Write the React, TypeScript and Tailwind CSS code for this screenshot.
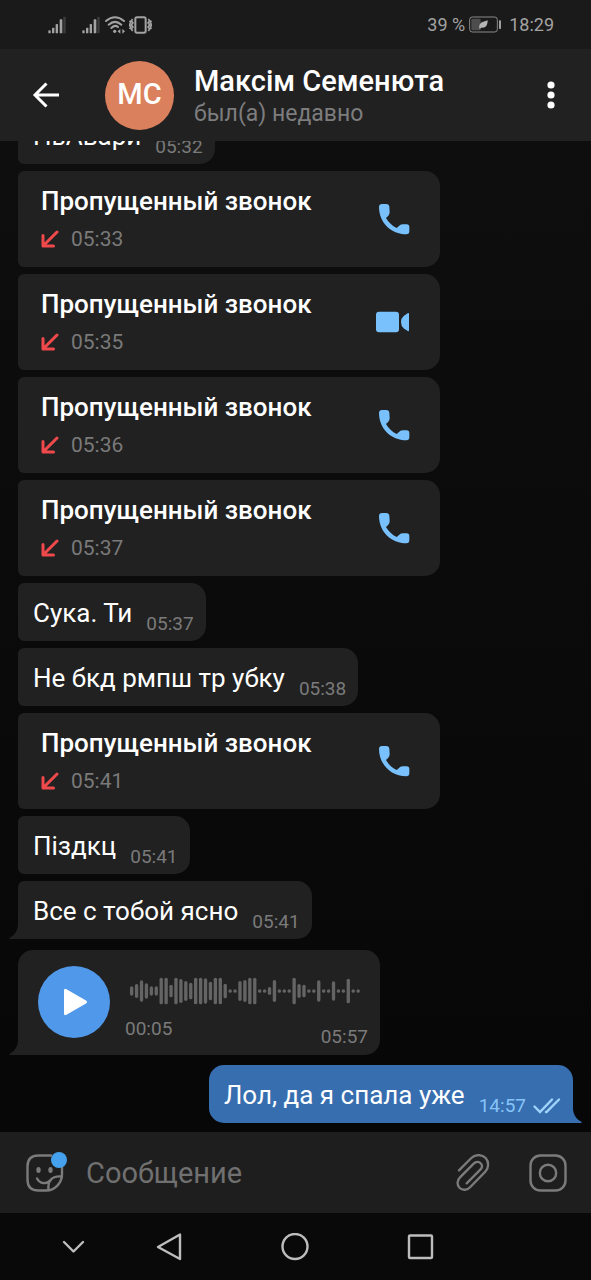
import clsx from "clsx";
import { ReactNode } from "react";

type Message =
  | { kind: "text"; text: string; time: string; tail?: boolean; own?: boolean }
  | { kind: "call"; time: string; video?: boolean }
  | { kind: "voice"; duration: string; time: string };

const messages: Message[] = [
  { kind: "text", text: "НьАвари", time: "05:32" },
  { kind: "call", time: "05:33" },
  { kind: "call", time: "05:35", video: true },
  { kind: "call", time: "05:36" },
  { kind: "call", time: "05:37" },
  { kind: "text", text: "Сука. Ти", time: "05:37" },
  { kind: "text", text: "Не бкд рмпш тр убку", time: "05:38" },
  { kind: "call", time: "05:41" },
  { kind: "text", text: "Піздкц", time: "05:41" },
  { kind: "text", text: "Все с тобой ясно", time: "05:41", tail: true },
  { kind: "voice", duration: "00:05", time: "05:57" },
  { kind: "text", text: "Лол, да я спала уже", time: "14:57", tail: true, own: true },
];

const waveform = [
  28, 42, 64, 46, 28, 28, 80, 80, 38, 80, 72, 60, 50, 80, 80, 76, 56, 80, 80, 44, 11, 11, 60, 66,
  80, 80, 11, 11, 24, 66, 11, 11, 11, 80, 42, 38, 11, 11, 64, 11, 11, 58, 11, 11, 74, 11, 11,
];

function SignalIcon() {
  return (
    <svg width="18" height="18" viewBox="0 0 54 54" aria-hidden="true">
      <g fill="#a2a2a2">
        <rect x="1" y="43" width="7" height="9" rx="2" />
        <rect x="12" y="35" width="7" height="17" rx="2" />
        <rect x="23" y="24" width="7" height="28" rx="2" />
        <rect x="35" y="10" width="8" height="42" rx="2" />
      </g>
      <rect x="46" y="2" width="7" height="50" rx="2" fill="#3d3d3d" />
    </svg>
  );
}

function WifiIcon() {
  return (
    <svg width="20" height="18" viewBox="0 0 60 54" fill="none" stroke="#a2a2a2" strokeWidth="6" strokeLinecap="round" aria-hidden="true">
      <path d="M3 15 Q30 -7 57 15" />
      <path d="M11 26 Q30 9 49 26" />
      <path d="M19 36 Q30 25 39 33" />
      <circle cx="29" cy="46" r="5" fill="#a2a2a2" stroke="none" />
      <path d="M38 46 l8 -7 v14z M60 46 l-8 -7 v14z" fill="#a2a2a2" stroke="none" />
    </svg>
  );
}

function VibrateIcon() {
  return (
    <svg width="23" height="18" viewBox="0 0 69 54" fill="none" stroke="#a2a2a2" strokeWidth="5" strokeLinejoin="round" aria-hidden="true">
      <rect x="19" y="4" width="31" height="46" rx="5" strokeWidth="6" />
      <path d="M11 9 l-4 5 5 6 -5 7 5 6 -5 6 4 6 M2 14 l3 6 -4 7 4 6 -3 6" />
      <path d="M58 9 l4 5 -5 6 5 7 -5 6 5 6 -4 6 M67 14 l-3 6 4 7 -4 6 3 6" />
    </svg>
  );
}

function BatteryIcon() {
  return (
    <svg width="32" height="17" viewBox="0 0 96 51" aria-hidden="true">
      <rect x="2" y="3" width="83" height="45" rx="8" fill="none" stroke="#8a8a8a" strokeWidth="3" />
      <rect x="7" y="8" width="28" height="35" rx="3" fill="#4d4d4d" />
      <rect x="90" y="13" width="6" height="26" rx="2" fill="#a2a2a2" />
      <path d="M31 37 c-2-11 4-18 12-20 l13-4 c0 15-5 24-20 22 l-4 4z" fill="#b4b4b4" />
    </svg>
  );
}

function StatusBar() {
  return (
    <div className="flex h-[49px] shrink-0 items-center bg-[#1a1a1a] pr-[37px] pl-12 text-[18px] text-[#a2a2a2]">
      <SignalIcon />
      <div className="ml-4">
        <SignalIcon />
      </div>
      <div className="ml-[5px] flex items-center gap-1">
        <WifiIcon />
        <VibrateIcon />
      </div>
      <div className="ml-auto flex items-center gap-1">
        <span>39 %</span>
        <BatteryIcon />
        <span className="ml-1">18:29</span>
      </div>
    </div>
  );
}

function Header() {
  return (
    <header className="flex h-[92px] shrink-0 items-center bg-[#212122] pr-9 pl-8">
      <button type="button" aria-label="Назад">
        <svg width="28" height="28" viewBox="0 0 28 28" fill="none" stroke="#fff" strokeWidth="3">
          <path d="M27 14 H3 M14.500 2.500 L3 14 L14.500 25.500" />
        </svg>
      </button>
      <div className="ml-[45px] flex size-[69px] items-center justify-center rounded-full bg-[#db805c] text-[29px] font-medium text-white">
        МС
      </div>
      <div className="ml-5 min-w-0 flex-1 pt-[3px]">
        <h1 className="truncate text-[29px] leading-[34px] font-medium text-white">Максім Семенюта</h1>
        <p className="text-[23px] leading-8 text-[#7d7d7e]">был(а) недавно</p>
      </div>
      <button type="button" aria-label="Меню">
        <svg width="8" height="28" viewBox="0 0 8 28" fill="#fff">
          <circle cx="4" cy="4" r="3.600" />
          <circle cx="4" cy="14" r="3.600" />
          <circle cx="4" cy="24" r="3.600" />
        </svg>
      </button>
    </header>
  );
}

function Tail({ own }: { own?: boolean }) {
  return (
    <svg
      className={clsx("absolute bottom-0", own ? "-right-[9px] -scale-x-100 text-[#376eb0]" : "-left-[9px] text-[#212121]")}
      width="10"
      height="20"
      viewBox="0 0 10 20"
      fill="currentColor"
      aria-hidden="true"
    >
      <path d="M10 0 H9 V5 C9 11 6 16 1 18.500 Q-0.500 19.500 1 20 H10Z" />
    </svg>
  );
}

function Bubble({ own, tail, className, children }: { own?: boolean; tail?: boolean; className?: string; children: ReactNode }) {
  return (
    <div
      className={clsx(
        "relative flex max-w-full shrink-0",
        own ? "self-end rounded-[15px] bg-[#376eb0]" : "self-start rounded-l-md rounded-r-[15px] bg-[#212121]",
        tail && (own ? "rounded-br-none" : "rounded-bl-none"),
        className,
      )}
    >
      {children}
      {tail && <Tail own={own} />}
    </div>
  );
}

function PhoneIcon() {
  return (
    <svg width="34" height="34" viewBox="0 0 102 102" fill="#78c1fd" aria-hidden="true">
      <path d="M18 6 h13 q8 0 9 8 l1 17 q0 6 -4 10 l-7 7 c7 13 19 24 32 30 l7 -6 q4 -5 10 -5 h13 q8 0 8 8 v13 q0 9 -9 9 C45 97 9 61 9 15 Q9 6 18 6z" />
    </svg>
  );
}

function VideoIcon() {
  return (
    <svg width="34" height="34" viewBox="0 0 102 102" fill="#78c1fd" aria-hidden="true">
      <rect x="0" y="20" width="69" height="62" rx="9" />
      <path d="M99 27 V76 Q99 80 95 78 L83 70 Q75 63 75 51 Q75 40 83 33 L95 25 Q99 23 99 27z" />
    </svg>
  );
}

function CallMessage({ time, video }: { time: string; video?: boolean }) {
  return (
    <Bubble className="h-24 w-[422px] items-center justify-between pr-[30px] pl-[23px]">
      <div className="pt-px">
        <div className="text-[26px] leading-[38px] font-medium text-white">Пропущенный звонок</div>
        <div className="flex items-center gap-3 text-[21px] leading-[38px] text-[#7a7a7a]">
          <svg width="18" height="18" viewBox="0 0 18 18" fill="none" stroke="#f0494c" strokeWidth="3" strokeLinecap="round" strokeLinejoin="round" aria-hidden="true">
            <path d="M16 2 L2.500 15.500 M2 5.500 V16 H12.500" />
          </svg>
          <span>{time}</span>
        </div>
      </div>
      <button type="button" aria-label={video ? "Видеозвонок" : "Позвонить"}>
        {video ? <VideoIcon /> : <PhoneIcon />}
      </button>
    </Bubble>
  );
}

function TextMessage({ text, time, tail, own }: { text: string; time: string; tail?: boolean; own?: boolean }) {
  return (
    <Bubble own={own} tail={tail} className="min-h-[58px] items-end gap-[14px] pr-3 pl-[15px]">
      <span className="pt-[15px] pb-[13px] text-[26px] leading-[30px] text-white">{text}</span>
      <span className={clsx("flex items-center gap-[6px] pb-[5px] text-[19px] leading-6", own ? "text-[#86c4f8]" : "text-[#7a7a7a]")}>
        {time}
        {own && (
          <svg width="29" height="18" viewBox="0 0 29 18" fill="none" stroke="#9fd4fa" strokeWidth="2.400" strokeLinecap="round" aria-hidden="true">
            <path d="M2.500 9.500 L8 15 L20 2.500 M14 15 L14.500 15 L27 2.500" />
          </svg>
        )}
      </span>
    </Bubble>
  );
}

function VoiceMessage({ duration, time }: { duration: string; time: string }) {
  return (
    <Bubble tail className="mt-1 mb-[3px] h-[105px] w-[362px] rounded-tl-[15px] pr-3 pl-5">
      <button type="button" aria-label="Воспроизвести" className="mt-4 flex size-[72px] shrink-0 items-center justify-center rounded-full bg-[#4f98ea]">
        <svg width="28" height="28" viewBox="0 0 28 28" fill="#fff">
          <path d="M4 2.500 Q4 0 6.500 1.200 L26 12.500 Q28 14 26 15.500 L6.500 26.800 Q4 28 4 25.500z" />
        </svg>
      </button>
      <div className="ml-[15px] min-w-0 flex-1 pt-[26px] text-[19px] leading-6 text-[#7a7a7a]">
        <svg className="ml-1" width="232" height="30" viewBox="0 0 696 90" stroke="#646464" strokeWidth="10" strokeLinecap="round" aria-hidden="true">
          {waveform.map((h, i) => (
            <line key={i} x1={8 + i * 14.77} x2={8 + i * 14.77} y1={45 - (h - 10) / 2} y2={45 + (h - 10) / 2} />
          ))}
        </svg>
        <div className="flex justify-between pt-[11px]">
          <span>{duration}</span>
          <span className="pt-2">{time}</span>
        </div>
      </div>
    </Bubble>
  );
}

function Composer() {
  return (
    <form className="flex h-[81px] shrink-0 items-center bg-[#1e1e1e] pr-6 pl-[26px]" onSubmit={(e) => e.preventDefault()}>
      <button type="button" aria-label="Стикеры" className="relative">
        <svg width="38" height="38" viewBox="0 0 38 38" fill="none" stroke="#7b7b7b" strokeWidth="2.400" strokeLinecap="round">
          <path d="M25 1.500 H12.500 Q1.500 1.500 1.500 12.500 V25.500 Q1.500 36.500 12.500 36.500 H20 C29 36.500 36 29 36 20 V12" />
          <path d="M22.500 36 C22 30 22.500 28 24.500 26 C27 23 30 22 36 22.500" />
          <path d="M11 24.500 C14 30 20 30.500 24.500 26.500" />
          <ellipse cx="12.500" cy="16" rx="2.200" ry="3" fill="#7b7b7b" stroke="none" />
          <ellipse cx="24.500" cy="16" rx="2.200" ry="3" fill="#7b7b7b" stroke="none" />
        </svg>
        <span className="absolute -top-[2px] -right-[3px] size-4 rounded-full bg-[#45a1ec]" />
      </button>
      <input
        type="text"
        aria-label="Сообщение"
        placeholder="Сообщение"
        className="ml-[22px] min-w-0 flex-1 bg-transparent pt-[3px] text-[29px] text-white outline-none placeholder:text-[#707070]"
      />
      <button type="button" aria-label="Прикрепить">
        <svg width="34" height="38" viewBox="0 0 102 114" fill="none" stroke="#7b7b7b" strokeWidth="7" strokeLinecap="round">
          <path d="M9 49 L46 12 C58 0 78 1 89 12 C99 23 99 42 88 53 L43 99 C34 109 20 110 11 102 C2 93 3 79 12 70 L53 29 C60 22 69 22 74 28 C80 33 79 41 73 47 L32 88" />
        </svg>
      </button>
      <button type="button" aria-label="Камера" className="ml-[39px]">
        <svg width="38" height="38" viewBox="0 0 38 38" fill="none" stroke="#7b7b7b" strokeWidth="2.400">
          <rect x="1.500" y="1.500" width="35" height="35" rx="10" />
          <circle cx="19" cy="19" r="8.200" />
        </svg>
      </button>
    </form>
  );
}

function NavBar() {
  const icon = { width: 28, height: 28, viewBox: "0 0 28 28", fill: "none", stroke: "#bdbdbd", strokeWidth: 2.4, strokeLinecap: "round", strokeLinejoin: "round" } as const;
  return (
    <nav className="flex h-[67px] shrink-0 items-center justify-center bg-[#090909] pr-[99px]">
      <button type="button" aria-label="Скрыть" className="flex w-24 justify-center">
        <svg {...icon}>
          <path d="M5 9 L14.500 18.500 L24 9" />
        </svg>
      </button>
      <button type="button" aria-label="Назад" className="flex w-24 justify-center">
        <svg {...icon}>
          <path d="M25 1.500 V26 L3 14z" />
        </svg>
      </button>
      <button type="button" aria-label="Домой" className="flex w-[156px] justify-center">
        <svg {...icon}>
          <circle cx="14" cy="13.500" r="12.500" />
        </svg>
      </button>
      <button type="button" aria-label="Недавние" className="flex w-[94px] justify-center">
        <svg {...icon}>
          <rect x="3" y="2.500" width="23" height="22.500" rx="1" />
        </svg>
      </button>
    </nav>
  );
}

export default function App() {
  return (
    <div className="flex h-screen flex-col bg-[#0b0b0b] font-[Roboto,'Noto_Sans',sans-serif]">
      <StatusBar />
      <Header />
      <main className="flex min-h-0 flex-1 flex-col justify-end gap-[7px] overflow-hidden bg-linear-to-b from-[#0e0e0e] to-[#070707] px-[18px] pb-[9px]">
        {messages.map((message, i) => {
          if (message.kind === "call") return <CallMessage key={i} {...message} />;
          if (message.kind === "voice") return <VoiceMessage key={i} {...message} />;
          return <TextMessage key={i} {...message} />;
        })}
      </main>
      <Composer />
      <NavBar />
    </div>
  );
}
